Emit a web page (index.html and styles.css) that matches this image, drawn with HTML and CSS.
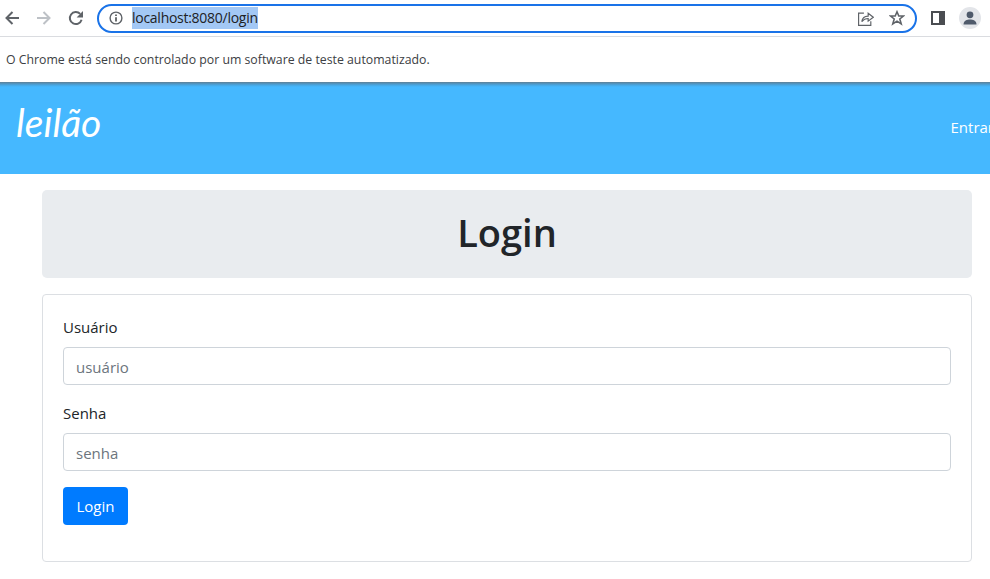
FILE: index.html
```html
<!DOCTYPE html>
<html lang="pt-BR">
<head>
  <meta charset="UTF-8" />
  <title>Login</title>
  <link rel="stylesheet" href="styles.css">
</head>
<body>
  <div class="toolbar">
    <svg class="tool-icon" viewBox="0 0 16 16"><path d="M15 8H2.5M8.5 2L2.5 8L8.5 14" fill="none" stroke="#5f6368" stroke-width="2"/></svg>
    <svg class="tool-icon" viewBox="0 0 16 16"><path d="M1 8H13.5M7.5 2L13.5 8L7.5 14" fill="none" stroke="#bdc1c6" stroke-width="2"/></svg>
    <svg class="tool-icon reload" viewBox="0 0 16 16"><path d="M13.6 9.8A6 6 0 1 1 12.2 3.9" fill="none" stroke="#5f6368" stroke-width="2"/><path d="M15 1V7.4H8.6z" fill="#5f6368"/></svg>
    <div class="omnibox">
      <svg class="info-icon" viewBox="0 0 14 14"><circle cx="7" cy="7" r="5.9" fill="none" stroke="#5f6368" stroke-width="1.4"/><path d="M7 6.2V10.4M7 3.6V5.1" stroke="#3c4043" stroke-width="1.5"/></svg>
      <span class="url">localhost:8080/login</span>
      <svg class="share-icon" viewBox="0 0 16 16"><path d="M6.5 3H1.5V14.5H13V10.5" fill="none" stroke="#5f6368" stroke-width="1.1"/><path d="M4.5 11C5 7.5 7.5 5.8 10.5 5.8V3L15.3 6.8L10.5 10.5V8C8 8 6 9 4.5 11Z" fill="none" stroke="#5f6368" stroke-width="1.1"/></svg>
      <svg class="star-icon" viewBox="0 0 16 16"><path d="M8 1.8L9.8 6H14.5L10.8 9L12.2 13.8L8 11.1L3.8 13.8L5.2 9L1.5 6H6.2Z" fill="none" stroke="#5f6368" stroke-width="1.6"/></svg>
    </div>
    <div class="side-panel"></div>
    <div class="avatar">
      <svg viewBox="0 0 22 22"><circle cx="11" cy="7.8" r="3.4" fill="#4f5a6b"/><path d="M4.5 17.5C4.5 13.8 8 12.6 11 12.6S17.5 13.8 17.5 17.5Z" fill="#4f5a6b"/></svg>
    </div>
  </div>
  <div class="infobar">O Chrome está sendo controlado por um software de teste automatizado.</div>

  <div class="page">
    <nav class="navbar">
      <a class="brand" href="#">leilão</a>
      <a class="nav-link" href="#">Entrar</a>
    </nav>
    <main class="container">
      <div class="jumbotron"><h1>Login</h1></div>
      <div class="card">
        <form class="form">
          <div class="form-group">
            <label for="username">Usuário</label>
            <input id="username" type="text" placeholder="usuário"/>
          </div>
          <div class="form-group">
            <label for="password">Senha</label>
            <input id="password" type="password" placeholder="senha"/>
          </div>
          <button class="btn" type="submit">Login</button>
        </form>
      </div>
    </main>
  </div>
</body>
</html>
```

FILE: styles.css
```css
html, body {
  height: 100%;
  margin: 0;
  overflow: hidden;
  background: #fff;
  font-family: 'Open Sans', 'Noto Sans', Arial, sans-serif;
  color: #212529;
}
.toolbar {
  height: 36px;
  border-bottom: 1px solid #dadce0;
  display: flex;
  align-items: center;
  padding-left: 4px;
}
.tool-icon {
  width: 16px;
  height: 16px;
  margin-right: 16px;
  flex: none;
}
.tool-icon.reload {
  margin-right: 13px;
}
.omnibox {
  width: 820px;
  height: 29px;
  box-sizing: border-box;
  border: 2px solid #1a73e8;
  border-radius: 15px;
  display: flex;
  align-items: center;
  padding-left: 10px;
  flex: none;
}
.info-icon {
  width: 14px;
  height: 14px;
  margin-right: 9px;
}
.url {
  background: #a3c8f5;
  color: #202124;
  font-size: 14px;
  line-height: 22px;
  letter-spacing: -0.27px;
  margin-right: auto;
}
.share-icon {
  width: 17px;
  height: 17px;
  margin-right: 15px;
}
.star-icon {
  width: 16px;
  height: 16px;
  margin-right: 10px;
}
.side-panel {
  width: 14px;
  height: 14px;
  box-sizing: border-box;
  border: 2px solid #4a4d51;
  border-right-width: 6px;
  margin-left: 14px;
  background: #fff;
}
.avatar {
  width: 22px;
  height: 22px;
  border-radius: 50%;
  background: #e3e5e9;
  margin-left: 14px;
}
.avatar svg {
  display: block;
  width: 22px;
  height: 22px;
}
.infobar {
  height: 45px;
  line-height: 45px;
  padding-left: 6px;
  font-size: 12.3px;
  color: #3c4043;
}
.page {
  width: 1010px;
}
.navbar {
  height: 92px;
  background: linear-gradient(#5f7f95 0, #47a5e0 3px, #45b8ff 5px);
  display: flex;
  align-items: center;
  justify-content: space-between;
  padding: 0 16px;
  box-sizing: border-box;
}
.brand {
  color: #fff;
  text-decoration: none;
  font-family: 'Lato', sans-serif;
  font-style: italic;
  font-size: 39px;
  line-height: 1;
  margin-top: -12px;
}
.nav-link {
  color: #fff;
  text-decoration: none;
  font-size: 15px;
  margin-top: -2px;
}
.container {
  width: 930px;
  margin-left: 42px;
  padding-top: 16px;
}
.jumbotron {
  height: 88px;
  background: #e9ecef;
  border-radius: 5px;
  display: flex;
  align-items: center;
  justify-content: center;
  margin-bottom: 16px;
}
.jumbotron h1 {
  margin: -2px 0 0;
  font-size: 38px;
  font-weight: 600;
  line-height: 1.2;
}
.card {
  height: 268px;
  box-sizing: border-box;
  border: 1px solid #dcdfe3;
  border-radius: 4px;
  padding: 20px;
}
.form {
  display: flex;
  flex-direction: column;
  align-items: flex-start;
}
.form-group {
  width: 100%;
  margin-bottom: 16px;
}
.form-group label {
  display: block;
  font-size: 15px;
  line-height: 24px;
  margin-bottom: 8px;
  height: 24px;
}
.form-group input {
  display: block;
  width: 100%;
  height: 38px;
  box-sizing: border-box;
  padding: 8px 12px 6px;
  border: 1px solid #ced4da;
  border-radius: 4px;
  font-family: inherit;
  font-size: 15px;
  outline: none;
}
.form-group input::placeholder {
  color: #6c757d;
  opacity: 1;
}
.btn {
  width: 65px;
  height: 38px;
  background: #007bff;
  color: #fff;
  border: none;
  border-radius: 4px;
  font-family: inherit;
  font-size: 15px;
  padding: 0;
}
```
